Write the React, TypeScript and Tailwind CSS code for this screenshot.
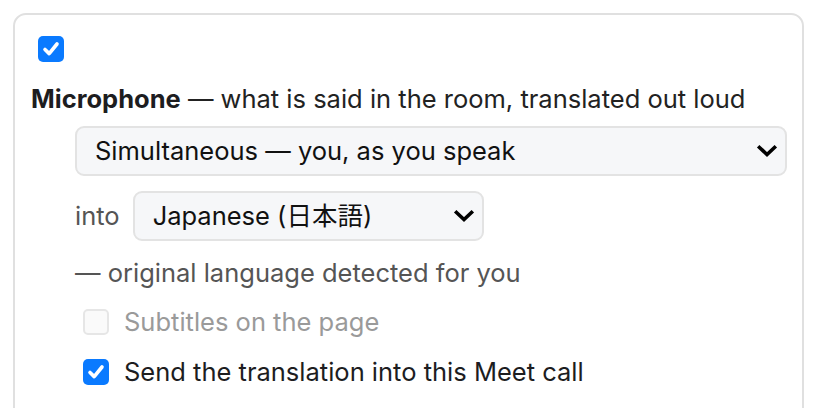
import React from 'react';

function Check({ checked, disabled }: { checked?: boolean; disabled?: boolean }) {
  if (checked) {
    return (
      <span className="flex h-[26px] w-[26px] shrink-0 items-center justify-center rounded-[5px] bg-[#0a7aff]">
        <svg width="20" height="20" viewBox="0 0 20 20">
          <path d="M4 10.5 L8.2 14.6 L16 5" fill="none" stroke="#ffffff" strokeWidth="3.6" strokeLinecap="round" strokeLinejoin="round" />
        </svg>
      </span>
    );
  }
  return (
    <span
      className={
        disabled
          ? 'block h-[26px] w-[26px] shrink-0 rounded-[5px] border-2 border-[#e6e6e6] bg-[#fafafa]'
          : 'block h-[26px] w-[26px] shrink-0 rounded-[5px] border-2 border-[#bbbbbb] bg-white'
      }
    />
  );
}

function Chevron() {
  return (
    <svg width="22" height="14" viewBox="0 0 22 14">
      <path d="M3.5 3.5 L11 10.5 L18.5 3.5" fill="none" stroke="#000000" strokeWidth="3.6" strokeLinecap="square" />
    </svg>
  );
}

function FakeSelect({ value, className }: { value: string; className: string }) {
  return (
    <div
      className={
        'flex h-[50px] items-center justify-between rounded-[9px] border-2 border-[#e3e3e3] bg-[#f6f7f9] pl-[18px] pr-[7px] text-[#111111] ' +
        className
      }
    >
      <span>{value}</span>
      <Chevron />
    </div>
  );
}

export default function App() {
  return (
    <div
      className="min-h-[408px] bg-white pl-[13px] pt-[13px] text-[25.5px] leading-[32px] text-[#222222]"
      style={{ fontFamily: 'Inter, "Noto Sans CJK JP", sans-serif' }}
    >
      <div className="h-[420px] w-[791px] rounded-[13px] border-2 border-[#e0e0e0] px-[16px] pt-[21px]">
        <div className="ml-[7px]">
          <Check checked />
        </div>

        <div className="mt-[21px]">
          <span className="font-bold text-[#1d1d1f]">Microphone</span> — what is said in the room, translated out loud
        </div>

        <div className="ml-[44px] mt-[11px]">
          <FakeSelect value="Simultaneous — you, as you speak" className="w-[712px]" />

          <div className="mt-[15px] flex items-center gap-[13px]">
            <span className="text-[#555555]">into</span>
            <FakeSelect value="Japanese (日本語)" className="w-[351px]" />
          </div>

          <div className="mt-[16px] text-[#555555]">— original language detected for you</div>

          <div className="mt-[17px] flex items-center gap-[15px] pl-[8px]">
            <Check disabled />
            <span className="text-[#9a9a9a]">Subtitles on the page</span>
          </div>

          <div className="mt-[18px] flex items-center gap-[15px] pl-[8px]">
            <Check checked />
            <span className="text-[#1d1d1f]">Send the translation into this Meet call</span>
          </div>
        </div>
      </div>
    </div>
  );
}
